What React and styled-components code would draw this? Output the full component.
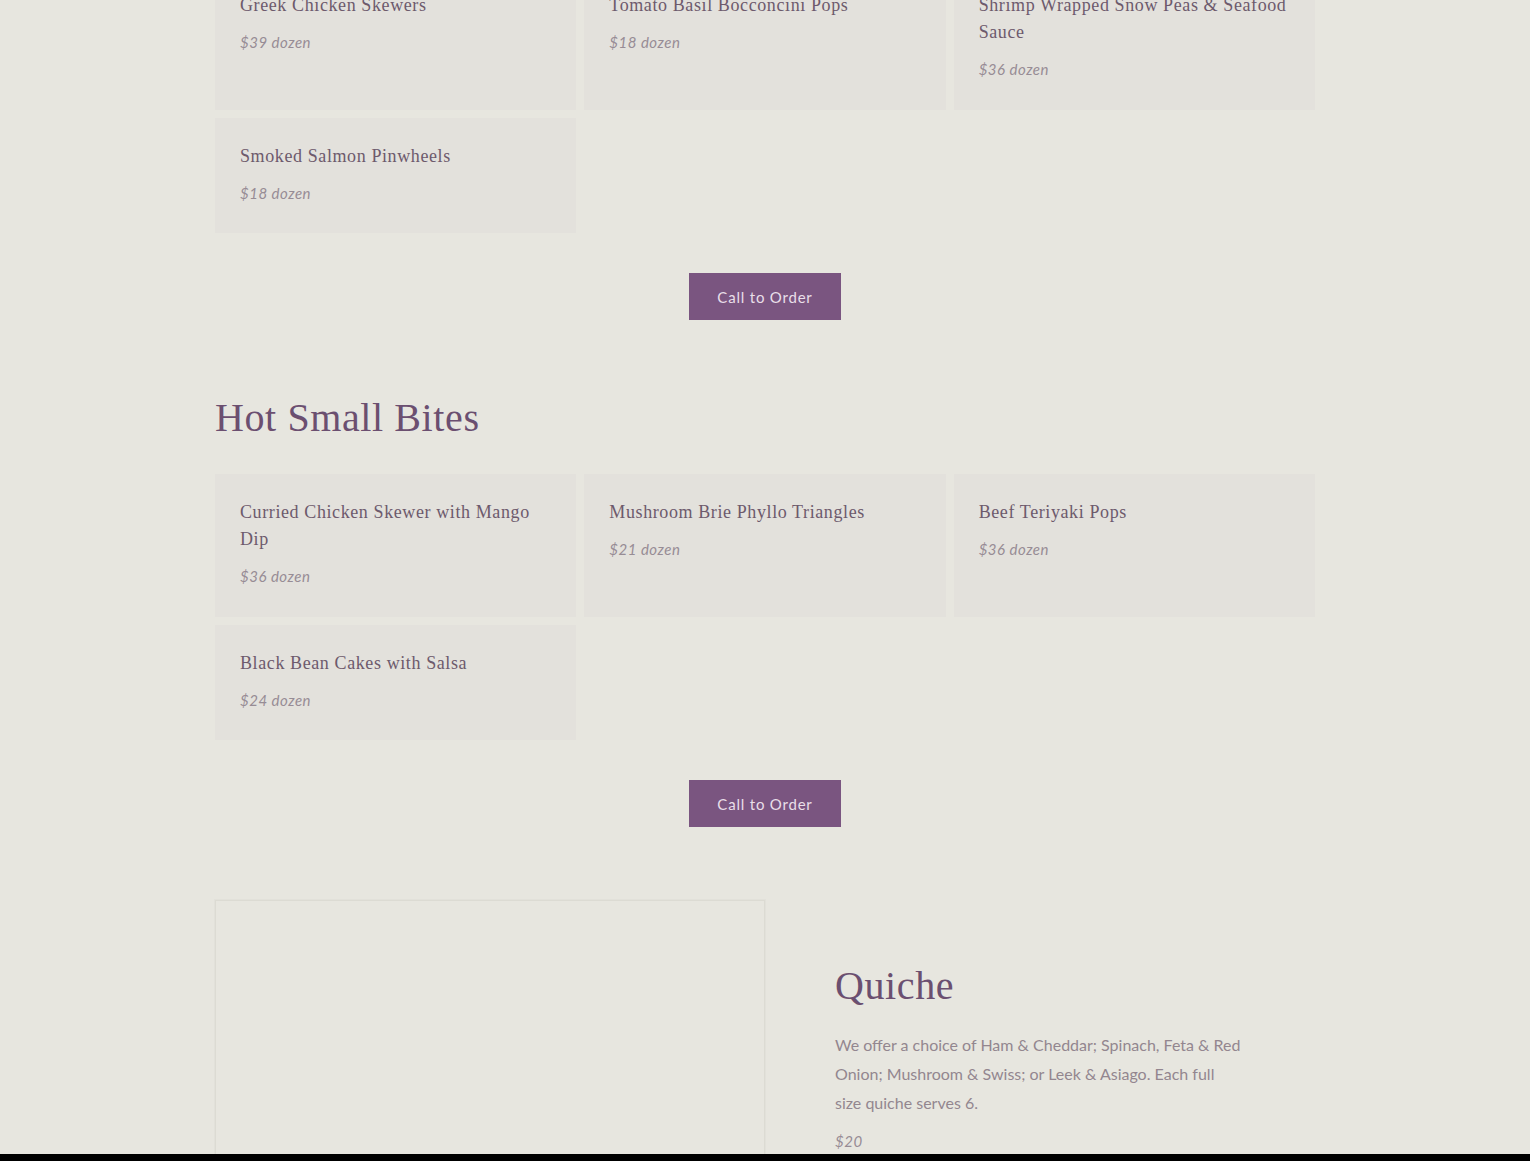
import styled, { createGlobalStyle } from 'styled-components';

const GlobalStyle = createGlobalStyle`
  html, body {
    margin: 0;
    padding: 0;
    background: #000;
  }
  * {
    box-sizing: border-box;
  }
`;

const coldBites = [
  { name: 'Greek Chicken Skewers', price: '$39 dozen' },
  { name: 'Tomato Basil Bocconcini Pops', price: '$18 dozen' },
  { name: 'Shrimp Wrapped Snow Peas & Seafood Sauce', price: '$36 dozen' },
  { name: 'Smoked Salmon Pinwheels', price: '$18 dozen' },
];

const hotBites = [
  { name: 'Curried Chicken Skewer with Mango Dip', price: '$36 dozen' },
  { name: 'Mushroom Brie Phyllo Triangles', price: '$21 dozen' },
  { name: 'Beef Teriyaki Pops', price: '$36 dozen' },
  { name: 'Black Bean Cakes with Salsa', price: '$24 dozen' },
];

const Menu = ({ items }) => (
  <CardGrid>
    {items.map((item) => (
      <Card key={item.name}>
        <CardTitle>{item.name}</CardTitle>
        <Price>{item.price}</Price>
      </Card>
    ))}
  </CardGrid>
);

const App = () => {
  return (
    <>
      <GlobalStyle />
      <Viewport>
        <Page>
          <Section>
            <Menu items={coldBites} />
            <ButtonRow>
              <OrderButton>Call to Order</OrderButton>
            </ButtonRow>
          </Section>

          <Section>
            <Heading>Hot Small Bites</Heading>
            <Menu items={hotBites} />
            <ButtonRow>
              <OrderButton>Call to Order</OrderButton>
            </ButtonRow>
          </Section>

          <Feature>
            <ImageFrame />
            <FeatureText>
              <Heading>Quiche</Heading>
              <Body>
                We offer a choice of Ham &amp; Cheddar; Spinach, Feta &amp; Red
                Onion; Mushroom &amp; Swiss; or Leek &amp; Asiago. Each full
                size quiche serves 6.
              </Body>
              <Price>$20</Price>
            </FeatureText>
          </Feature>
        </Page>
      </Viewport>
      <BottomStrip />
    </>
  );
};

const Viewport = styled.div`
  height: 1154px;
  overflow: hidden;
  background: #e7e6df;
  font-family: 'Lato', 'Liberation Sans', sans-serif;
`;

const Page = styled.main`
  width: 1100px;
  margin: -33px auto 0;
`;

const Section = styled.section`
  padding-bottom: 72px;
`;

const Heading = styled.h2`
  margin: 0 0 30px;
  font-family: 'Liberation Serif', 'Times New Roman', serif;
  font-weight: 400;
  font-size: 40px;
  line-height: 52px;
  letter-spacing: 0.6px;
  color: #6b4f70;
`;

const CardGrid = styled.div`
  display: grid;
  grid-template-columns: repeat(3, 1fr);
  gap: 8px;
`;

const Card = styled.div`
  background: #e3e1dc;
  padding: 25px 25px 26.5px;
`;

const CardTitle = styled.h3`
  margin: 0;
  font-family: 'Liberation Serif', 'Times New Roman', serif;
  font-weight: 400;
  font-size: 18px;
  line-height: 27px;
  letter-spacing: 0.6px;
  color: #6d5a6c;
`;

const Price = styled.p`
  margin: 10px 0 0;
  font-style: italic;
  font-size: 15px;
  line-height: 27px;
  letter-spacing: 0.5px;
  color: #978c95;
`;

const ButtonRow = styled.div`
  display: flex;
  justify-content: center;
  margin-top: 40px;
`;

const OrderButton = styled.button`
  height: 47px;
  padding: 0 28px;
  border: none;
  background: #7a5580;
  color: #e9dfe9;
  font-family: 'Lato', 'Liberation Sans', sans-serif;
  font-size: 15px;
  letter-spacing: 0.8px;
  cursor: pointer;
`;

const Feature = styled.section`
  display: grid;
  grid-template-columns: 1fr 1fr;
  margin-top: 1px;
`;

const ImageFrame = styled.div`
  min-height: 420px;
  border: 1px solid #dcdbd3;
  box-shadow: 0 0 0 1px #e2e1da;
`;

const FeatureText = styled.div`
  padding: 60px 70px 40px;

  h2 {
    margin-bottom: 18px;
  }

  p:last-child {
    margin-top: 11px;
  }
`;

const Body = styled.p`
  margin: 0;
  max-width: 408px;
  font-size: 16px;
  line-height: 29px;
  letter-spacing: 0;
  color: #93868f;
`;

const BottomStrip = styled.div`
  height: 7px;
  background: #000;
`;

export default App;
